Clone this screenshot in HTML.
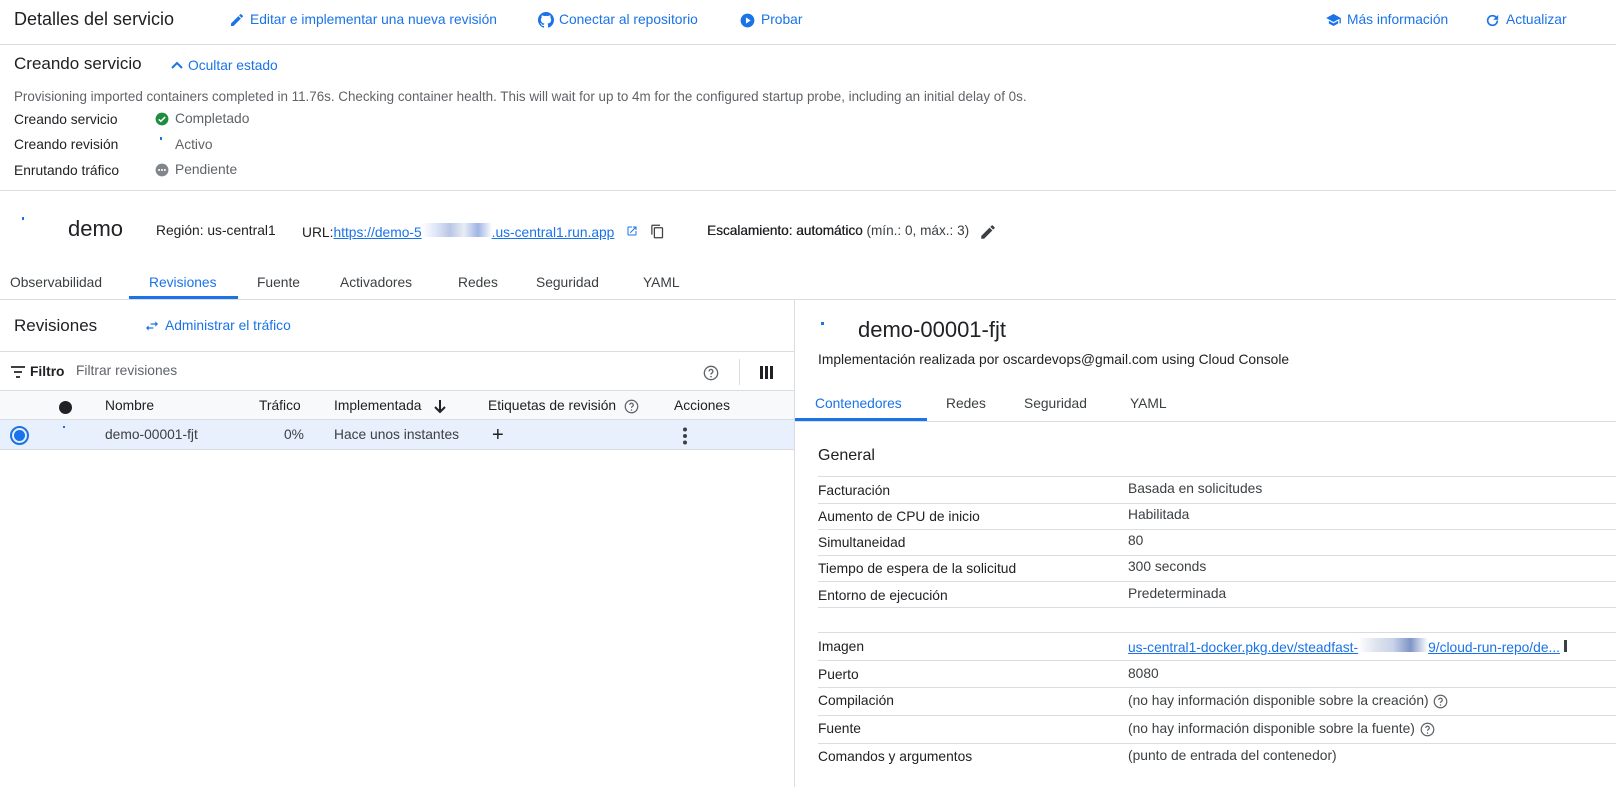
<!DOCTYPE html>
<html><head><meta charset="utf-8"><style>
*{margin:0;padding:0;box-sizing:border-box}
body{width:1616px;height:787px;overflow:hidden;background:#fff;font-family:"Liberation Sans",Arial,sans-serif;color:#202124;position:relative;font-size:13.8px}
.a{position:absolute;white-space:nowrap}
.b{color:#1a73e8}
.g{color:#5f6368}
.hl{position:absolute;height:1px;background:#dadce0}
.vl{position:absolute;width:1px;background:#dadce0}
svg{position:absolute}
</style></head><body>
<!-- header -->
<div class="a" style="left:14px;top:9px;font-size:18px">Detalles del servicio</div>
<svg style="left:229px;top:12px" width="16" height="16" viewBox="0 0 24 24"><path fill="#1a73e8" d="M3 17.25V21h3.75L17.8 9.94l-3.75-3.75L3 17.25zM20.7 7.04a1 1 0 000-1.41l-2.34-2.34a1 1 0 00-1.41 0l-1.83 1.83 3.75 3.75 1.83-1.83z"/></svg>
<div class="a b" style="left:250px;top:12px">Editar e implementar una nueva revisión</div>
<svg style="left:538px;top:12px" width="16" height="16" viewBox="0 0 16 16"><path fill="#1a73e8" d="M8 0C3.58 0 0 3.58 0 8c0 3.54 2.29 6.53 5.47 7.59.4.07.55-.17.55-.38v-1.33c-2.23.48-2.7-1.07-2.7-1.070-.36-.92-.89-1.17-.89-1.17-.73-.5.06-.49.06-.49.8.06 1.230.83 1.23.83.71 1.23 1.88.87 2.34.66.07-.52.28-.87.51-1.07-1.78-.2-3.64-.89-3.64-3.95 0-.87.31-1.59.82-2.15-.08-.2-.36-1.02.08-2.12 0 0 .67-.21 2.2.82a7.6 7.6 0 014 0c1.53-1.04 2.2-.82 2.2-.82.44 1.1.16 1.92.08 2.12.51.56.82 1.27.82 2.15 0 3.07-1.87 3.75-3.65 3.95.29.25.54.73.54 1.48v2.2c0 .21.15.46.55.38A8 8 0 0016 8c0-4.42-3.58-8-8-8z"/></svg>
<div class="a b" style="left:559px;top:12px">Conectar al repositorio</div>
<svg style="left:740px;top:13px" width="15" height="15" viewBox="0 0 24 24"><circle cx="12" cy="12" r="11" fill="#1a73e8"/><path d="M9.5 7v10l7.5-5z" fill="#fff"/></svg>
<div class="a b" style="left:761px;top:12px">Probar</div>
<svg style="left:1325px;top:12px" width="17" height="16" viewBox="0 0 24 24"><path fill="#1a73e8" d="M5 13.18v4L12 21l7-3.82v-4L12 17l-7-3.82zM12 3L1 9l11 6 9-4.91V17h2V9L12 3z"/></svg>
<div class="a b" style="left:1347px;top:12px">Más información</div>
<svg style="left:1484px;top:12px" width="17" height="17" viewBox="0 0 24 24"><path fill="#1a73e8" d="M17.65 6.35A7.96 7.96 0 0012 4a8 8 0 108 8h-2.3A5.7 5.7 0 1112 6.3c1.6 0 3 .65 4.050 1.7L13 11h7V4l-2.35 2.35z"/></svg>
<div class="a b" style="left:1506px;top:12px">Actualizar</div>
<div class="hl" style="left:0;top:44px;width:1616px"></div>
<!-- status -->
<div class="a" style="left:14px;top:54px;font-size:17px">Creando servicio</div>
<svg style="left:170px;top:60px" width="14" height="10" viewBox="0 0 14 10"><path d="M2 8l5-5 5 5" stroke="#1a73e8" stroke-width="2" fill="none"/></svg>
<div class="a b" style="left:188px;top:58px">Ocultar estado</div>
<div class="a g" style="left:14px;top:89px;font-size:13.4px">Provisioning imported containers completed in 11.76s. Checking container health. This will wait for up to 4m for the configured startup probe, including an initial delay of 0s.</div>
<div class="a" style="left:14px;top:112px">Creando servicio</div>
<div class="a" style="left:14px;top:137px">Creando revisión</div>
<div class="a" style="left:14px;top:163px">Enrutando tráfico</div>
<svg style="left:155px;top:112px" width="14" height="14" viewBox="0 0 24 24"><circle cx="12" cy="12" r="11" fill="#1e8e3e"/><path d="M6.5 12.5l3.5 3.5 7.5-7.5" stroke="#fff" stroke-width="2.6" fill="none"/></svg>
<div class="a g" style="left:175px;top:111px">Completado</div>
<div class="a" style="left:160px;top:137px;width:2px;height:3px;background:#1a73e8"></div>
<div class="a g" style="left:175px;top:137px">Activo</div>
<svg style="left:155px;top:163px" width="14" height="14" viewBox="0 0 24 24"><circle cx="12" cy="12" r="11" fill="#80868b"/><circle cx="7" cy="12" r="1.8" fill="#fff"/><circle cx="12" cy="12" r="1.8" fill="#fff"/><circle cx="17" cy="12" r="1.8" fill="#fff"/></svg>
<div class="a g" style="left:175px;top:162px">Pendiente</div>
<div class="hl" style="left:0;top:190px;width:1616px"></div>
<!-- service row -->
<div class="a" style="left:22px;top:217px;width:2px;height:3px;background:#1a73e8"></div>
<div class="a" style="left:68px;top:216px;font-size:22px">demo</div>
<div class="a" style="left:156px;top:223px">Región: us-central1</div>
<div class="a" style="left:302px;top:223px">URL:<span class="b" style="text-decoration:underline">https://demo-5<span style="display:inline-block;width:70px;height:14px;background:linear-gradient(90deg,#fff,#dfe6f8,#b9c6e6,#e8ecf5,#9fb5e6,#fff)"></span>.us-central1.run.app</span></div>
<svg style="left:626px;top:225px" width="12" height="12" viewBox="0 0 24 24"><path fill="#1a73e8" d="M19 19H5V5h7V3H5a2 2 0 00-2 2v14a2 2 0 002 2h14a2 2 0 002-2v-7h-2v7zM14 3v2h3.6l-9.8 9.8 1.4 1.4L19 6.4V10h2V3h-7z"/></svg>
<svg style="left:650px;top:223px" width="15" height="17" viewBox="0 0 24 24"><path fill="#3c4043" d="M16 1H4a2 2 0 00-2 2v14h2V3h12V1zm3 4H8a2 2 0 00-2 2v14a2 2 0 002 2h11a2 2 0 002-2V7a2 2 0 00-2-2zm0 16H8V7h11v14z"/></svg>
<div class="a" style="left:707px;top:223px;font-size:13.6px"><span style="text-shadow:0.3px 0 0 #202124">Escalamiento: automático</span> <span style="color:#3c4043">(mín.: 0, máx.: 3)</span></div>
<svg style="left:979px;top:223px" width="18" height="18" viewBox="0 0 24 24"><path fill="#3c4043" d="M3 17.25V21h3.75L17.8 9.94l-3.75-3.75L3 17.25zM20.7 7.04a1 1 0 000-1.41l-2.34-2.34a1 1 0 00-1.41 0l-1.83 1.83 3.75 3.75 1.83-1.83z"/></svg>
<!-- tabs -->
<div class="a" style="left:10px;top:275px;color:#3c4043">Observabilidad</div>
<div class="a b" style="left:149px;top:275px">Revisiones</div>
<div class="a" style="left:257px;top:275px;color:#3c4043">Fuente</div>
<div class="a" style="left:340px;top:275px;color:#3c4043">Activadores</div>
<div class="a" style="left:458px;top:275px;color:#3c4043">Redes</div>
<div class="a" style="left:536px;top:275px;color:#3c4043">Seguridad</div>
<div class="a" style="left:643px;top:275px;color:#3c4043">YAML</div>
<div class="hl" style="left:0;top:299px;width:1616px"></div>
<div class="a" style="left:129px;top:296px;width:109px;height:3px;background:#1a73e8"></div>
<div class="vl" style="left:794px;top:300px;height:487px"></div>
<!-- left panel -->
<div class="a" style="left:14px;top:316px;font-size:17px">Revisiones</div>
<svg style="left:144px;top:318px" width="16" height="16" viewBox="0 0 24 24"><path fill="#1a73e8" d="M7 11l-4 4 4 4v-3h7v-2H7v-3zm14-2l-4-4v3h-7v2h7v3l4-4z"/></svg>
<div class="a b" style="left:165px;top:318px">Administrar el tráfico</div>
<div class="hl" style="left:0;top:351px;width:794px"></div>
<svg style="left:11px;top:366px" width="14" height="12" viewBox="0 0 14 12"><path d="M0 1h14M3 6h8M5 11h4" stroke="#3c4043" stroke-width="2"/></svg>
<div class="a" style="left:30px;top:364px;font-weight:600">Filtro</div>
<div class="a g" style="left:76px;top:363px">Filtrar revisiones</div>
<svg style="left:703px;top:365px" width="16" height="16" viewBox="0 0 24 24"><circle cx="12" cy="12" r="10" fill="none" stroke="#5f6368" stroke-width="2"/><path d="M9.2 9.5a2.8 2.8 0 115 1.7c-.9.8-2.2 1.3-2.2 3" fill="none" stroke="#5f6368" stroke-width="2"/><circle cx="12" cy="17.5" r="1.2" fill="#5f6368"/></svg>
<div class="vl" style="left:739px;top:359px;height:26px"></div>
<svg style="left:760px;top:366px" width="13" height="13" viewBox="0 0 13 13"><path d="M0 0h3v13H0zM5 0h3v13H5zM10 0h3v13h-3z" fill="#202124"/></svg>
<div class="a" style="left:0;top:390px;width:794px;height:30px;background:#f8f9fa;border-top:1px solid #dadce0;border-bottom:1px solid #dadce0"></div>
<div class="a" style="left:59px;top:401px;width:13px;height:13px;border-radius:50%;background:#202124"></div>
<div class="a" style="left:105px;top:398px">Nombre</div>
<div class="a" style="left:259px;top:398px">Tráfico</div>
<div class="a" style="left:334px;top:398px">Implementada</div>
<svg style="left:433px;top:399px" width="14" height="15" viewBox="0 0 14 15"><path d="M7 1v12M2 8l5 5 5-5" stroke="#202124" stroke-width="2" fill="none"/></svg>
<div class="a" style="left:488px;top:398px">Etiquetas de revisión</div>
<svg style="left:624px;top:399px" width="15" height="15" viewBox="0 0 24 24"><circle cx="12" cy="12" r="10" fill="none" stroke="#5f6368" stroke-width="2"/><path d="M9.2 9.5a2.8 2.8 0 115 1.7c-.9.8-2.2 1.3-2.2 3" fill="none" stroke="#5f6368" stroke-width="2"/><circle cx="12" cy="17.5" r="1.2" fill="#5f6368"/></svg>
<div class="a" style="left:674px;top:398px">Acciones</div>
<div class="a" style="left:0;top:420px;width:794px;height:30px;background:#e8f0fe;border-bottom:1px solid #dadce0"></div>
<div class="a" style="left:10px;top:426px;width:19px;height:19px;border-radius:50%;border:2px solid #1a73e8"></div>
<div class="a" style="left:14px;top:430px;width:11px;height:11px;border-radius:50%;background:#1a73e8"></div>
<div class="a" style="left:63px;top:426px;width:2px;height:2px;background:#1a73e8"></div>
<div class="a" style="left:105px;top:427px;color:#3c4043">demo-00001-fjt</div>
<div class="a" style="left:284px;top:427px;color:#3c4043">0%</div>
<div class="a" style="left:334px;top:427px;color:#3c4043">Hace unos instantes</div>
<div class="a" style="left:492px;top:424px;font-size:20px">+</div>
<svg style="left:682px;top:427px" width="6" height="18" viewBox="0 0 6 18"><circle cx="3" cy="2.5" r="2" fill="#3c4043"/><circle cx="3" cy="9" r="2" fill="#3c4043"/><circle cx="3" cy="15.5" r="2" fill="#3c4043"/></svg>
<!-- right panel -->
<div class="a" style="left:821px;top:322px;width:3px;height:3px;background:#1a73e8"></div>
<div class="a" style="left:858px;top:317px;font-size:22px">demo-00001-fjt</div>
<div class="a" style="left:818px;top:352px">Implementación realizada por oscardevops@gmail.com using Cloud Console</div>
<div class="a b" style="left:815px;top:396px">Contenedores</div>
<div class="a" style="left:946px;top:396px;color:#3c4043">Redes</div>
<div class="a" style="left:1024px;top:396px;color:#3c4043">Seguridad</div>
<div class="a" style="left:1130px;top:396px;color:#3c4043">YAML</div>
<div class="hl" style="left:795px;top:421px;width:821px"></div>
<div class="a" style="left:795px;top:418px;width:132px;height:3px;background:#1a73e8"></div>
<div class="a" style="left:818px;top:447px;font-size:16px">General</div>
<div class="hl" style="left:818px;top:476px;width:798px"></div>
<div class="a" style="left:818px;top:483px">Facturación</div><div class="a" style="left:1128px;top:481px;color:#3c4043">Basada en solicitudes</div>
<div class="hl" style="left:818px;top:503px;width:798px"></div>
<div class="a" style="left:818px;top:509px">Aumento de CPU de inicio</div><div class="a" style="left:1128px;top:507px;color:#3c4043">Habilitada</div>
<div class="hl" style="left:818px;top:529px;width:798px"></div>
<div class="a" style="left:818px;top:535px">Simultaneidad</div><div class="a" style="left:1128px;top:533px;color:#3c4043">80</div>
<div class="hl" style="left:818px;top:555px;width:798px"></div>
<div class="a" style="left:818px;top:561px">Tiempo de espera de la solicitud</div><div class="a" style="left:1128px;top:559px;color:#3c4043">300 seconds</div>
<div class="hl" style="left:818px;top:581px;width:798px"></div>
<div class="a" style="left:818px;top:588px">Entorno de ejecución</div><div class="a" style="left:1128px;top:586px;color:#3c4043">Predeterminada</div>
<div class="hl" style="left:818px;top:607px;width:798px"></div>
<div class="hl" style="left:818px;top:632px;width:798px"></div>
<div class="a" style="left:818px;top:639px">Imagen</div>
<div class="a b" style="left:1128px;top:638px;text-decoration:underline">us-central1-docker.pkg.dev/steadfast-<span style="display:inline-block;width:70px;height:14px;background:linear-gradient(90deg,#fff,#e0e4ee,#c9d3ea,#7f95c6,#fff)"></span>9/cloud-run-repo/de...</div>
<div class="a" style="left:1564px;top:640px;width:3px;height:12px;background:#3c4043"></div>
<div class="hl" style="left:818px;top:660px;width:798px"></div>
<div class="a" style="left:818px;top:667px">Puerto</div><div class="a" style="left:1128px;top:666px;color:#3c4043">8080</div>
<div class="hl" style="left:818px;top:687px;width:798px"></div>
<div class="a" style="left:818px;top:693px">Compilación</div><div class="a" style="left:1128px;top:693px;color:#3c4043">(no hay información disponible sobre la creación)</div>
<svg style="left:1433px;top:694px" width="15" height="15" viewBox="0 0 24 24"><circle cx="12" cy="12" r="10" fill="none" stroke="#5f6368" stroke-width="2"/><path d="M9.2 9.5a2.8 2.8 0 115 1.7c-.9.8-2.2 1.3-2.2 3" fill="none" stroke="#5f6368" stroke-width="2"/><circle cx="12" cy="17.5" r="1.2" fill="#5f6368"/></svg>
<div class="hl" style="left:818px;top:715px;width:798px"></div>
<div class="a" style="left:818px;top:721px">Fuente</div><div class="a" style="left:1128px;top:721px;color:#3c4043">(no hay información disponible sobre la fuente)</div>
<svg style="left:1420px;top:722px" width="15" height="15" viewBox="0 0 24 24"><circle cx="12" cy="12" r="10" fill="none" stroke="#5f6368" stroke-width="2"/><path d="M9.2 9.5a2.8 2.8 0 115 1.7c-.9.8-2.2 1.3-2.2 3" fill="none" stroke="#5f6368" stroke-width="2"/><circle cx="12" cy="17.5" r="1.2" fill="#5f6368"/></svg>
<div class="hl" style="left:818px;top:743px;width:798px"></div>
<div class="a" style="left:818px;top:749px">Comandos y argumentos</div><div class="a" style="left:1128px;top:748px;color:#3c4043">(punto de entrada del contenedor)</div>
</body></html>
